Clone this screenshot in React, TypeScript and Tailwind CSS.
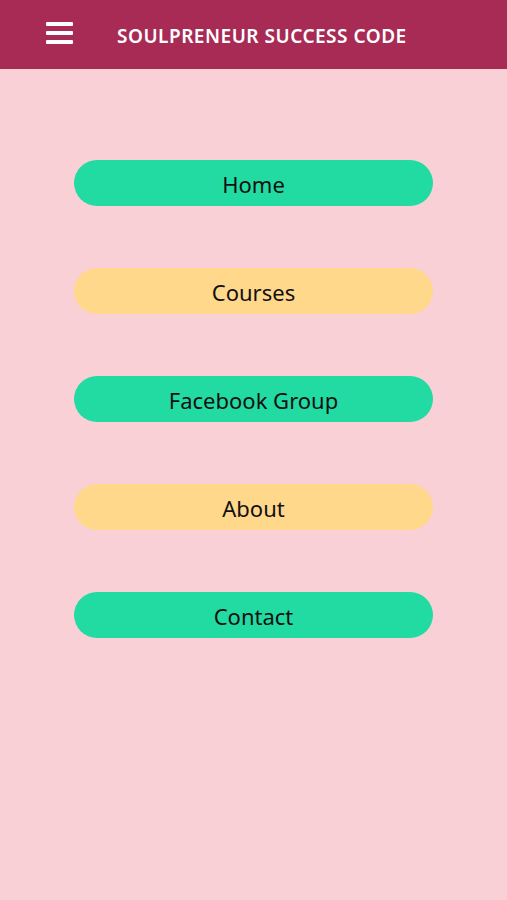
import React from "react";

const items = [
  { label: "Home", color: "bg-[#22dba2]" },
  { label: "Courses", color: "bg-[#ffd88b]" },
  { label: "Facebook Group", color: "bg-[#22dba2]" },
  { label: "About", color: "bg-[#ffd88b]" },
  { label: "Contact", color: "bg-[#22dba2]" },
];

export default function App() {
  return (
    <div className="min-h-[900px] w-full bg-[#f9d0d6] font-['Noto_Sans',sans-serif]">
      <header className="flex h-[69px] items-center bg-[#a82b55]">
        <div className="ml-[46px] mb-[4px] flex w-[27px] flex-col gap-[5px]">
          <span className="block h-[4px] rounded-[1px] bg-white" />
          <span className="block h-[4px] rounded-[1px] bg-white" />
          <span className="block h-[4px] rounded-[1px] bg-white" />
        </div>
        <h1 className="ml-[44px] mt-[4px] text-[19px] font-semibold tracking-[0.5px] text-white">
          SOULPRENEUR SUCCESS CODE
        </h1>
      </header>
      <nav className="flex flex-col items-center gap-[62px] pt-[91px]">
        {items.map((it) => (
          <button
            key={it.label}
            className={`flex h-[46px] w-[359px] items-center justify-center rounded-full ${it.color} pt-[2px] text-[22px] text-[#111]`}
          >
            {it.label}
          </button>
        ))}
      </nav>
    </div>
  );
}
